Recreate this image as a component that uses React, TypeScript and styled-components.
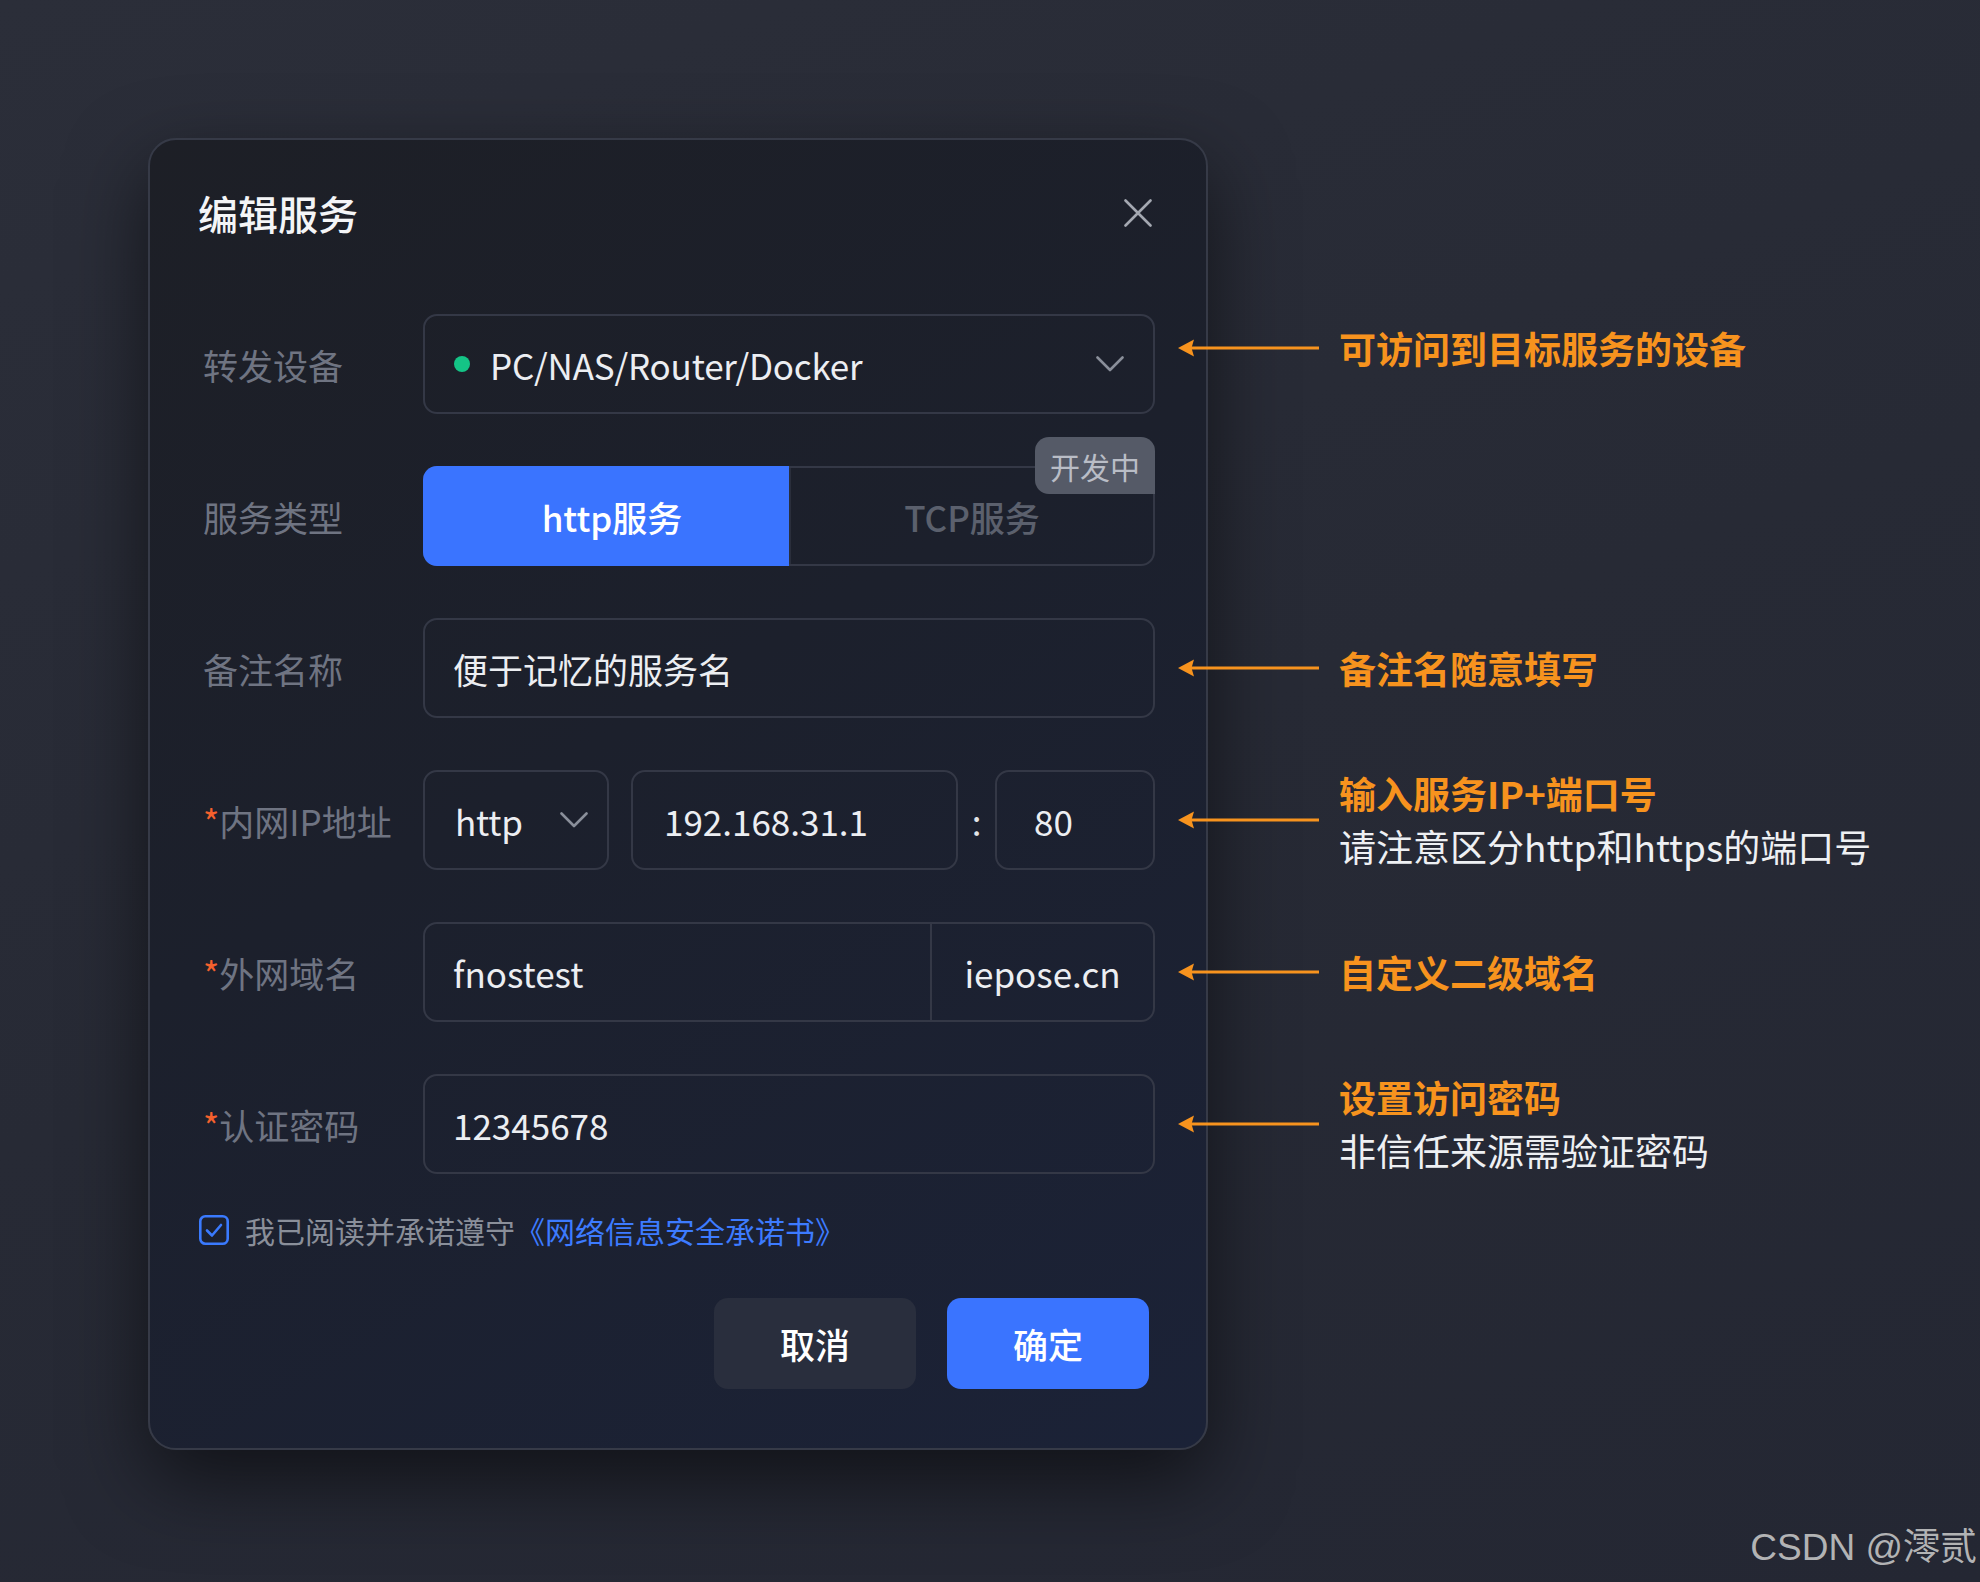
import styled, { createGlobalStyle } from 'styled-components'

const GlobalStyle = createGlobalStyle`
  html, body {
    margin: 0;
    padding: 0;
  }

  body {
    background: #262934;
    font-family: "Noto Sans CJK SC", "Noto Sans", sans-serif;
  }

  * {
    box-sizing: border-box;
  }
`

const Page = styled.main`
  position: relative;
  width: 1980px;
  height: 1582px;
  overflow: hidden;
  display: flex;
  align-items: flex-start;
  padding: 138px 0 0 148px;
  background: linear-gradient(160deg, #2b2e39 0%, #272a35 50%, #242733 100%);
`

const Dialog = styled.section`
  width: 1060px;
  flex-shrink: 0;
  display: flex;
  flex-direction: column;
  padding: 45px 51px 59px 48px;
  border: 2px solid #363a47;
  border-radius: 28px;
  background: linear-gradient(150deg, #1d1f26 0%, #1c202c 45%, #1b2237 100%);
  box-shadow: 0 30px 80px rgba(0, 0, 0, 0.55);
`

const Header = styled.header`
  display: flex;
  align-items: center;
  justify-content: space-between;
  height: 56px;
  margin-bottom: 73px;
`

const Title = styled.h2`
  margin: 0;
  font-size: 40px;
  line-height: 56px;
  font-weight: 500;
  color: #f4f5f7;
`

const CloseButton = styled.button`
  display: flex;
  padding: 0;
  margin-right: 3px;
  border: 0;
  background: none;
  color: #a4a8b1;
  cursor: pointer;
`

const Form = styled.div`
  display: flex;
  flex-direction: column;
  gap: 52px;
`

const Row = styled.div`
  display: grid;
  grid-template-columns: 225px 1fr;
  align-items: center;
  height: 100px;
`

const Label = styled.label`
  padding-left: 5px;
  font-size: 35px;
  color: #6f7482;
  white-space: nowrap;
`

const Required = styled.span`
  color: #f4612d;
`

const Field = styled.div<{ $pad?: number; $width?: number }>`
  display: flex;
  align-items: center;
  height: 100px;
  ${p => (p.$width ? `width: ${p.$width}px; flex-shrink: 0;` : 'flex: 1;')}
  padding: 0 28px 0 ${p => p.$pad ?? 28}px;
  border: 2px solid #343846;
  border-radius: 14px;
  font-size: 35px;
  color: #eceef2;
  white-space: nowrap;
`

const SelectField = styled(Field)<{ $gap?: number }>`
  gap: ${p => p.$gap ?? 20}px;
  padding-right: ${p => (p.$pad === 30 ? 19 : 29)}px;
`

const SelectText = styled.span`
  flex: 1;
  letter-spacing: -0.2px;
`

const Dot = styled.span`
  width: 16px;
  height: 16px;
  border-radius: 50%;
  background: #14c486;
  flex-shrink: 0;
`

const Segmented = styled.div`
  position: relative;
  display: grid;
  grid-template-columns: 1fr 1fr;
  height: 100px;
  border: 2px solid #343846;
  border-radius: 14px;
`

const Segment = styled.div<{ $active?: boolean }>`
  display: flex;
  align-items: center;
  justify-content: center;
  font-size: 35px;
  font-weight: 500;
  color: ${p => (p.$active ? '#ffffff' : '#5b606d')};
  background: ${p => (p.$active ? '#3a74ff' : 'transparent')};
  margin: ${p => (p.$active ? '-2px 0 -2px -2px' : '0')};
  padding-left: ${p => (p.$active ? '12px' : '0')};
  border-radius: ${p => (p.$active ? '14px 0 0 14px' : '0')};
  border-left: ${p => (p.$active ? '0' : '2px solid #2a2e3b')};
`

const Badge = styled.span`
  position: absolute;
  top: -31px;
  right: -2px;
  width: 120px;
  height: 57px;
  display: flex;
  align-items: center;
  justify-content: center;
  border-radius: 14px 14px 0 14px;
  background: #555a67;
  color: #b9bdc6;
  font-size: 30px;
`

const Inline = styled.div`
  display: flex;
  align-items: center;
`

const ProtocolGap = styled.span`
  width: 22px;
  flex-shrink: 0;
`

const Colon = styled.span`
  width: 37px;
  flex-shrink: 0;
  text-align: center;
  font-size: 35px;
  color: #e2e4e8;
`

const Group = styled.div`
  display: flex;
  height: 100px;
  border: 2px solid #343846;
  border-radius: 14px;
  font-size: 35px;
  color: #eceef2;
`

const GroupMain = styled.div`
  flex: 1;
  display: flex;
  align-items: center;
  padding-left: 28px;
`

const GroupSuffix = styled.div`
  width: 223px;
  display: flex;
  align-items: center;
  justify-content: center;
  border-left: 2px solid #343846;
`

const Agreement = styled.div`
  display: flex;
  align-items: center;
  gap: 16px;
  height: 44px;
  margin: 34px 0 0 1px;
  font-size: 30px;
  color: #8a8f9a;
`

const Link = styled.a`
  color: #3d7bff;
  text-decoration: none;
`

const Actions = styled.div`
  display: flex;
  justify-content: flex-end;
  gap: 31px;
  margin: 46px 6px 0 0;
`

const Button = styled.button<{ $primary?: boolean }>`
  width: 202px;
  height: 91px;
  border: 0;
  border-radius: 14px;
  font-family: inherit;
  font-size: 35px;
  font-weight: 500;
  color: #ffffff;
  background: ${p => (p.$primary ? '#3a74ff' : '#292e3d')};
  cursor: pointer;
`

const Notes = styled.aside`
  position: relative;
  z-index: 1;
  margin-left: -30px;
  padding-top: 176px;
  display: flex;
  flex-direction: column;
`

const NoteSlot = styled.div`
  height: 152px;
`

const Note = styled.div<{ $lift?: number }>`
  height: 100px;
  display: flex;
  align-items: center;
  gap: 20px;
  transform: translateY(${p => -(p.$lift ?? 0)}px);
`

const NoteText = styled.div`
  display: flex;
  flex-direction: column;
  font-size: 37px;
  line-height: 53px;
  white-space: nowrap;
`

const NoteTitle = styled.span`
  font-weight: 700;
  color: #f7931e;
`

const NoteSub = styled.span`
  color: #eef0f3;
`

const Watermark = styled.span`
  position: absolute;
  right: 3px;
  bottom: 16px;
  font-family: "Liberation Sans", "Noto Sans CJK SC", sans-serif;
  font-size: 37px;
  line-height: 37px;
  color: rgba(205, 205, 205, 0.85);
`

const Chevron = () => (
  <svg width="28" height="16" viewBox="0 0 28 16" fill="none">
    <polyline points="1.5,1.5 14,14 26.5,1.5" stroke="#8a8f9a" strokeWidth="2.6" strokeLinecap="round" strokeLinejoin="round" />
  </svg>
)

const CloseIcon = () => (
  <svg width="28" height="28" viewBox="0 0 28 28" fill="none">
    <path d="M1.5 1.5 L26.5 26.5 M26.5 1.5 L1.5 26.5" stroke="currentColor" strokeWidth="2.6" strokeLinecap="round" />
  </svg>
)

const CheckIcon = () => (
  <svg width="30" height="30" viewBox="0 0 30 30" fill="none">
    <rect x="1.3" y="1.3" width="27.4" height="27.4" rx="5" stroke="#3a7afe" strokeWidth="2.6" />
    <polyline points="8,15.5 13,20.5 22,10" stroke="#3a7afe" strokeWidth="2.6" strokeLinecap="round" strokeLinejoin="round" />
  </svg>
)

const Arrow = () => (
  <svg width="141" height="18" viewBox="0 0 141 18" fill="none">
    <path d="M0 9 L16 0.5 L13.5 9 L16 17.5 Z" fill="#f7931e" />
    <rect x="12" y="7.5" width="129" height="3" fill="#f7931e" />
  </svg>
)

type NoteItem = { title?: string; sub?: string; lift?: number }

const notes: NoteItem[] = [
  { title: '可访问到目标服务的设备', lift: 16 },
  {},
  { title: '备注名随意填写' },
  { title: '输入服务IP+端口号', sub: '请注意区分http和https的端口号' },
  { title: '自定义二级域名' },
  { title: '设置访问密码', sub: '非信任来源需验证密码' },
]

const App: React.FC = () => (
  <>
    <GlobalStyle />
    <Page>
      <Dialog>
        <Header>
          <Title>编辑服务</Title>
          <CloseButton aria-label="关闭">
            <CloseIcon />
          </CloseButton>
        </Header>

        <Form>
          <Row>
            <Label>转发设备</Label>
            <SelectField $pad={29}>
              <Dot />
              <SelectText>PC/NAS/Router/Docker</SelectText>
              <Chevron />
            </SelectField>
          </Row>

          <Row>
            <Label>服务类型</Label>
            <Segmented>
              <Segment $active>http服务</Segment>
              <Segment>TCP服务</Segment>
              <Badge>开发中</Badge>
            </Segmented>
          </Row>

          <Row>
            <Label>备注名称</Label>
            <Field>便于记忆的服务名</Field>
          </Row>

          <Row>
            <Label>
              <Required>*</Required>内网IP地址
            </Label>
            <Inline>
              <SelectField $width={186} $pad={30}>
                <SelectText>http</SelectText>
                <Chevron />
              </SelectField>
              <ProtocolGap />
              <Field $pad={31}>192.168.31.1</Field>
              <Colon>:</Colon>
              <Field $width={160} $pad={37}>80</Field>
            </Inline>
          </Row>

          <Row>
            <Label>
              <Required>*</Required>外网域名
            </Label>
            <Group>
              <GroupMain>fnostest</GroupMain>
              <GroupSuffix>iepose.cn</GroupSuffix>
            </Group>
          </Row>

          <Row>
            <Label>
              <Required>*</Required>认证密码
            </Label>
            <Field>12345678</Field>
          </Row>
        </Form>

        <Agreement>
          <CheckIcon />
          <span>
            我已阅读并承诺遵守<Link href="#">《网络信息安全承诺书》</Link>
          </span>
        </Agreement>

        <Actions>
          <Button>取消</Button>
          <Button $primary>确定</Button>
        </Actions>
      </Dialog>

      <Notes>
        {notes.map((n, i) => (
          <NoteSlot key={i}>
            {n.title && (
              <Note $lift={n.lift}>
                <Arrow />
                <NoteText>
                  <NoteTitle>{n.title}</NoteTitle>
                  {n.sub && <NoteSub>{n.sub}</NoteSub>}
                </NoteText>
              </Note>
            )}
          </NoteSlot>
        ))}
      </Notes>

      <Watermark>CSDN @澪贰</Watermark>
    </Page>
  </>
)

export { App as default }
